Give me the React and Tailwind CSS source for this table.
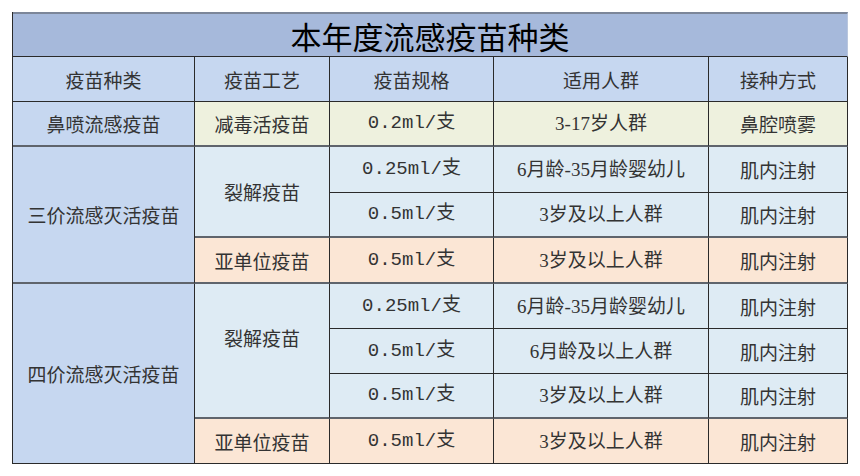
import React from "react";

const serif = "font-[family-name:Liberation_Serif,Noto_Sans_CJK_SC,serif]";
const mono = "font-[family-name:Liberation_Mono,Noto_Sans_CJK_SC,monospace]";
const sans = "font-[family-name:Noto_Sans_CJK_SC,sans-serif]";

function Cell({ className = "", children, font = sans }) {
  return (
    <div
      className={`flex items-center justify-center border-r border-b border-[#2a2a2a] text-[19px] text-[#333333] leading-none ${font} ${className}`}
    >
      {children}
    </div>
  );
}

export default function App() {
  const sep = "border-b-2 border-b-[#5f646c]";
  const nasal = "bg-[#eef1de]";
  const split = "bg-[#deebf4]";
  const sub = "bg-[#fbe6d5]";
  const blue = "bg-[#c6d7f0]";
  return (
    <div className="min-h-[476px] w-[860px] bg-white pt-[12px] pl-[12px]">
      <div className="grid w-[835px] grid-cols-[182px_135px_164px_215px_139px] grid-rows-[45px_45px_45px_46px_45px_46px_45px_45px_45px_45px] border-l border-[#2a2a2a]">
        <div className={`col-span-5 flex items-center justify-center border-t-2 border-t-[#7c8699] border-b border-b-[#2a2a2a] border-r border-r-[#b9c6dd] bg-[#a6b9db] text-[31px] text-black leading-none ${sans}`}>
          本年度流感疫苗种类
        </div>

        {/* header */}
        <Cell className={blue}>疫苗种类</Cell>
        <Cell className={blue}>疫苗工艺</Cell>
        <Cell className={blue}>疫苗规格</Cell>
        <Cell className={blue}>适用人群</Cell>
        <Cell className={blue}>接种方式</Cell>

        {/* nasal */}
        <Cell className={`${blue} ${sep}`}>鼻喷流感疫苗</Cell>
        <Cell className={`${nasal} ${sep}`}>减毒活疫苗</Cell>
        <Cell className={`${nasal} ${sep}`} font={mono}>0.2ml/支</Cell>
        <Cell className={`${nasal} ${sep}`} font={serif}>3-17岁人群</Cell>
        <Cell className={`${nasal} ${sep}`}>鼻腔喷雾</Cell>

        {/* trivalent */}
        <Cell className={`${blue} ${sep} col-start-1 row-start-4 row-span-3`}>三价流感灭活疫苗</Cell>
        <Cell className={`${split} ${sep} col-start-2 row-start-4 row-span-2`}>裂解疫苗</Cell>
        <Cell className={`${split} col-start-3 row-start-4`} font={mono}>0.25ml/支</Cell>
        <Cell className={`${split} col-start-4 row-start-4`} font={serif}>6月龄-35月龄婴幼儿</Cell>
        <Cell className={`${split} col-start-5 row-start-4`}>肌内注射</Cell>
        <Cell className={`${split} ${sep} col-start-3 row-start-5`} font={mono}>0.5ml/支</Cell>
        <Cell className={`${split} ${sep} col-start-4 row-start-5`} font={serif}>3岁及以上人群</Cell>
        <Cell className={`${split} ${sep} col-start-5 row-start-5`}>肌内注射</Cell>
        <Cell className={`${sub} ${sep} col-start-2 row-start-6`}>亚单位疫苗</Cell>
        <Cell className={`${sub} ${sep} col-start-3 row-start-6`} font={mono}>0.5ml/支</Cell>
        <Cell className={`${sub} ${sep} col-start-4 row-start-6`} font={serif}>3岁及以上人群</Cell>
        <Cell className={`${sub} ${sep} col-start-5 row-start-6`}>肌内注射</Cell>

        {/* quadrivalent */}
        <Cell className={`${blue} col-start-1 row-start-7 row-span-4`}>四价流感灭活疫苗</Cell>
        <Cell className={`${split} ${sep} col-start-2 row-start-7 row-span-3 pb-[26px]`}>裂解疫苗</Cell>
        <Cell className={`${split} col-start-3 row-start-7`} font={mono}>0.25ml/支</Cell>
        <Cell className={`${split} col-start-4 row-start-7`} font={serif}>6月龄-35月龄婴幼儿</Cell>
        <Cell className={`${split} col-start-5 row-start-7`}>肌内注射</Cell>
        <Cell className={`${split} col-start-3 row-start-8`} font={mono}>0.5ml/支</Cell>
        <Cell className={`${split} col-start-4 row-start-8`} font={serif}>6月龄及以上人群</Cell>
        <Cell className={`${split} col-start-5 row-start-8`}>肌内注射</Cell>
        <Cell className={`${split} ${sep} col-start-3 row-start-9`} font={mono}>0.5ml/支</Cell>
        <Cell className={`${split} ${sep} col-start-4 row-start-9`} font={serif}>3岁及以上人群</Cell>
        <Cell className={`${split} ${sep} col-start-5 row-start-9`}>肌内注射</Cell>
        <Cell className={`${sub} col-start-2 row-start-10`}>亚单位疫苗</Cell>
        <Cell className={`${sub} col-start-3 row-start-10`} font={mono}>0.5ml/支</Cell>
        <Cell className={`${sub} col-start-4 row-start-10`} font={serif}>3岁及以上人群</Cell>
        <Cell className={`${sub} col-start-5 row-start-10`}>肌内注射</Cell>
      </div>
    </div>
  );
}
